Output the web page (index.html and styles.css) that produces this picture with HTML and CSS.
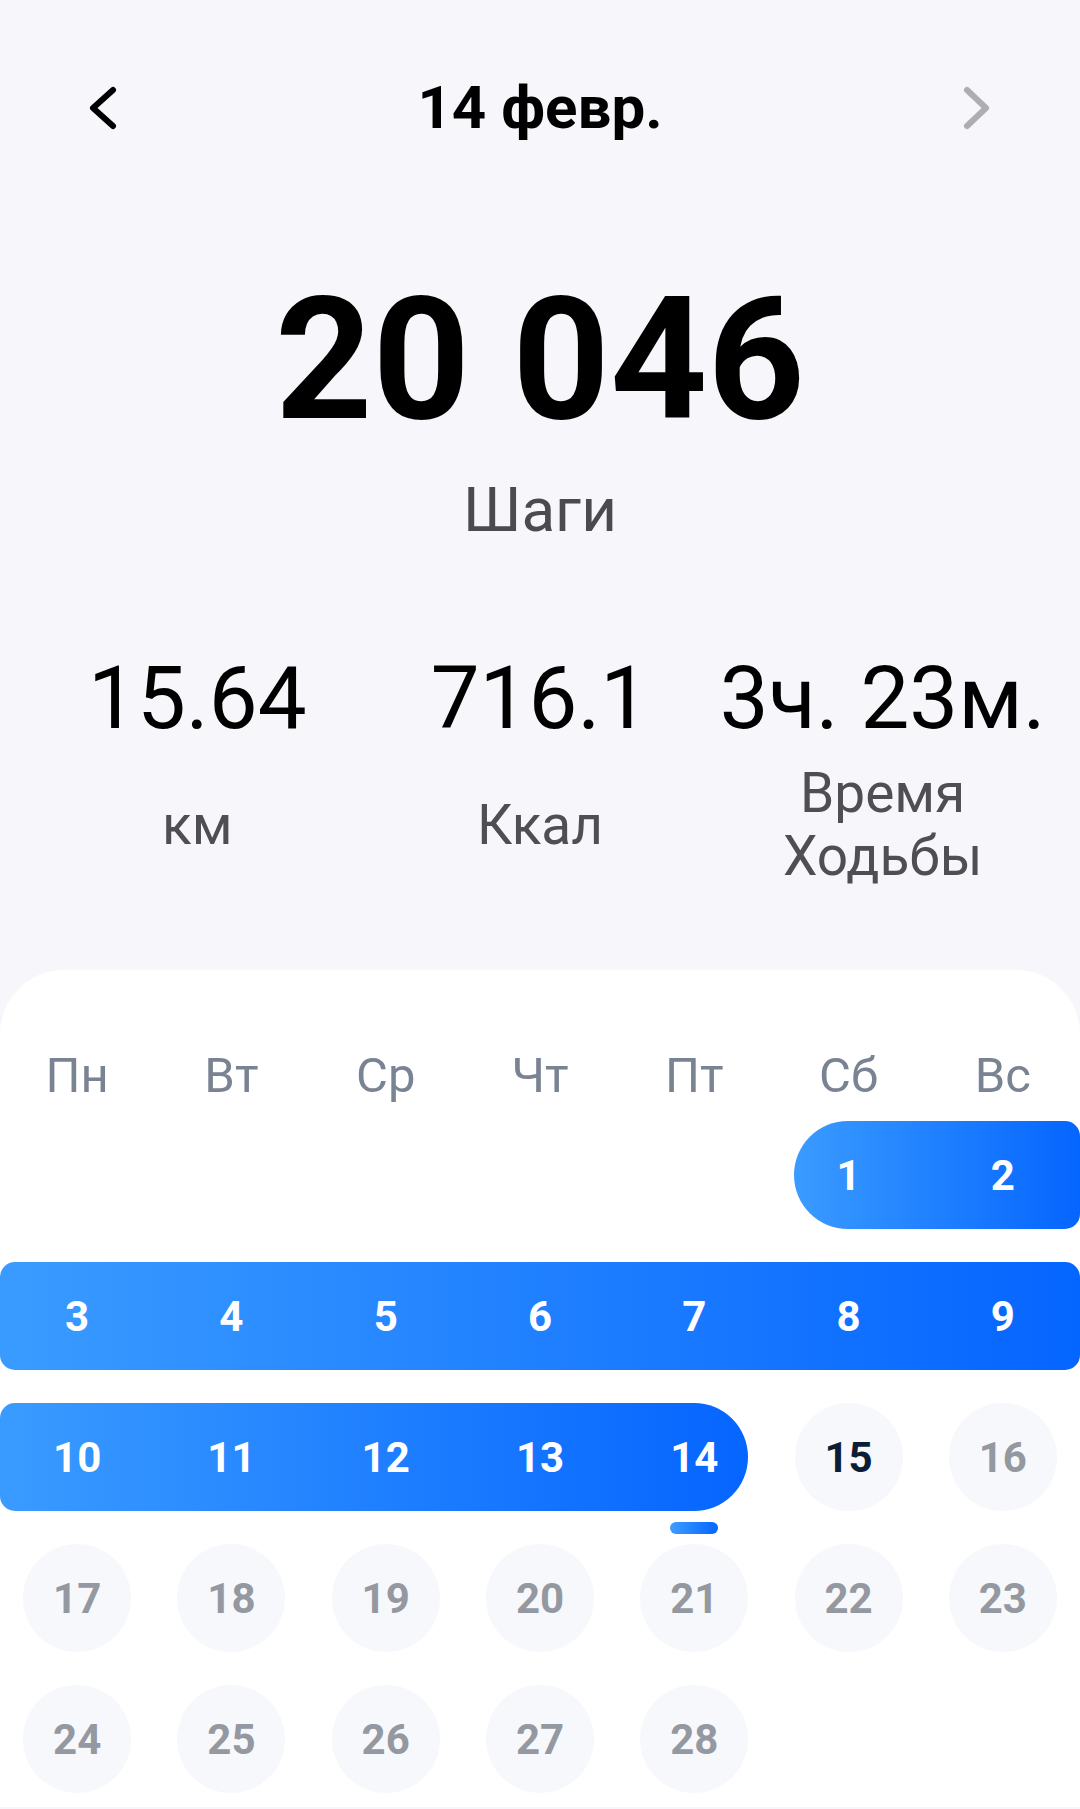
FILE: index.html
```html
<!DOCTYPE html>
<html lang="ru">

<head>
    <meta charset="UTF-8">
    <meta name="viewport" content="width=device-width, initial-scale=1.0">
    <title>Шаги</title>
    <link rel="stylesheet" href="styles.css">
</head>

<body>
    <div class="page">
        <!-- Date switcher -->
        <div class="topbar">
            <button class="nav-btn" aria-label="Назад">
                <svg viewBox="0 0 40 40" fill="none" stroke="#000" stroke-width="6" stroke-linecap="round" stroke-linejoin="round">
                    <polyline points="30,2 10,20 30,38" />
                </svg>
            </button>
            <h1 class="date-title">14 февр.</h1>
            <button class="nav-btn nav-btn--disabled" aria-label="Вперёд">
                <svg viewBox="0 0 40 40" fill="none" stroke="#adadb2" stroke-width="6" stroke-linecap="round" stroke-linejoin="round">
                    <polyline points="10,2 29,20 10,38" />
                </svg>
            </button>
        </div>

        <!-- Steps summary -->
        <div class="summary">
            <div class="steps-value">20 046</div>
            <div class="steps-label">Шаги</div>
        </div>

        <div class="stats">
            <div class="stat">
                <div class="stat-value">15.64</div>
                <div class="stat-label">км</div>
            </div>
            <div class="stat">
                <div class="stat-value">716.1</div>
                <div class="stat-label">Ккал</div>
            </div>
            <div class="stat">
                <div class="stat-value">3ч. 23м.</div>
                <div class="stat-label">Время<br>Ходьбы</div>
            </div>
        </div>

        <!-- Month calendar -->
        <div class="calendar">
            <div class="weekdays">
                <span>Пн</span>
                <span>Вт</span>
                <span>Ср</span>
                <span>Чт</span>
                <span>Пт</span>
                <span>Сб</span>
                <span>Вс</span>
            </div>

            <div class="weeks">
                <div class="week">
                    <div class="day"></div>
                    <div class="day"></div>
                    <div class="day"></div>
                    <div class="day"></div>
                    <div class="day"></div>
                    <div class="day day--in-range"><span class="day-num">1</span></div>
                    <div class="day day--in-range"><span class="day-num">2</span></div>
                    <div class="range range--sat-sun"></div>
                </div>
                <div class="week">
                    <div class="day day--in-range"><span class="day-num">3</span></div>
                    <div class="day day--in-range"><span class="day-num">4</span></div>
                    <div class="day day--in-range"><span class="day-num">5</span></div>
                    <div class="day day--in-range"><span class="day-num">6</span></div>
                    <div class="day day--in-range"><span class="day-num">7</span></div>
                    <div class="day day--in-range"><span class="day-num">8</span></div>
                    <div class="day day--in-range"><span class="day-num">9</span></div>
                    <div class="range range--full"></div>
                </div>
                <div class="week">
                    <div class="day day--in-range"><span class="day-num">10</span></div>
                    <div class="day day--in-range"><span class="day-num">11</span></div>
                    <div class="day day--in-range"><span class="day-num">12</span></div>
                    <div class="day day--in-range"><span class="day-num">13</span></div>
                    <div class="day day--in-range day--selected"><span class="day-num">14</span><span class="day-marker"></span></div>
                    <div class="day day--today"><span class="day-num">15</span></div>
                    <div class="day"><span class="day-num">16</span></div>
                    <div class="range range--mon-fri"></div>
                </div>
                <div class="week">
                    <div class="day"><span class="day-num">17</span></div>
                    <div class="day"><span class="day-num">18</span></div>
                    <div class="day"><span class="day-num">19</span></div>
                    <div class="day"><span class="day-num">20</span></div>
                    <div class="day"><span class="day-num">21</span></div>
                    <div class="day"><span class="day-num">22</span></div>
                    <div class="day"><span class="day-num">23</span></div>
                </div>
                <div class="week">
                    <div class="day"><span class="day-num">24</span></div>
                    <div class="day"><span class="day-num">25</span></div>
                    <div class="day"><span class="day-num">26</span></div>
                    <div class="day"><span class="day-num">27</span></div>
                    <div class="day"><span class="day-num">28</span></div>
                    <div class="day"></div>
                    <div class="day"></div>
                </div>
            </div>
        </div>
    </div>
</body>

</html>
```

FILE: styles.css
```css
body {
    margin: 0;
    padding: 0;
    background-color: #f7f7fb;
    font-family: Roboto, "Noto Sans", sans-serif;
    color: #000;
}

.page {
    width: 1080px;
    overflow: hidden;
}

/* Top bar */
.topbar {
    height: 216px;
    padding: 0 83px;
    box-sizing: border-box;
    display: flex;
    align-items: center;
    justify-content: space-between;
}

.nav-btn {
    width: 40px;
    height: 40px;
    padding: 0;
    border: none;
    background: none;
    display: flex;
    cursor: pointer;
}

.nav-btn svg {
    width: 40px;
    height: 40px;
    overflow: visible;
}

.date-title {
    margin: 0;
    font-size: 60px;
    font-weight: 700;
    line-height: 1;
}

/* Summary */
.summary {
    padding-top: 59px;
    text-align: center;
}

.steps-value {
    font-size: 170px;
    font-weight: 700;
    line-height: 170px;
}

.steps-label {
    margin-top: 34px;
    font-size: 62px;
    line-height: 62px;
    color: #4a4a4f;
}

.stats {
    margin-top: 113px;
    padding: 0 26px;
    display: grid;
    grid-template-columns: repeat(3, 1fr);
}

.stat {
    text-align: center;
}

.stat-value {
    font-size: 87px;
    line-height: 89px;
    white-space: nowrap;
}

.stat-label {
    height: 126px;
    margin-top: 19px;
    display: flex;
    align-items: center;
    justify-content: center;
    font-size: 55px;
    line-height: 63px;
    color: #4f4f53;
}

/* Calendar */
.calendar {
    margin-top: 82px;
    padding: 81px 0 14px;
    background-color: #fff;
    border-radius: 64px 64px 0 0;
}

.weekdays {
    display: grid;
    grid-template-columns: repeat(7, 1fr);
    font-size: 49px;
    line-height: 49px;
    color: #7a8391;
    text-align: center;
}

.weeks {
    margin-top: 21px;
    display: flex;
    flex-direction: column;
    gap: 33px;
}

.week {
    display: grid;
    grid-template-columns: repeat(7, 1fr);
    grid-template-rows: 108px;
}

.week > * {
    grid-row: 1;
}

.day:nth-child(1) { grid-column: 1; }
.day:nth-child(2) { grid-column: 2; }
.day:nth-child(3) { grid-column: 3; }
.day:nth-child(4) { grid-column: 4; }
.day:nth-child(5) { grid-column: 5; }
.day:nth-child(6) { grid-column: 6; }
.day:nth-child(7) { grid-column: 7; }

.day {
    position: relative;
    z-index: 1;
    display: flex;
    align-items: center;
    justify-content: center;
}

.day-num {
    width: 108px;
    height: 108px;
    border-radius: 50%;
    background-color: #f7f8fb;
    display: flex;
    align-items: center;
    justify-content: center;
    font-size: 42px;
    font-weight: 700;
    color: #9498a1;
}

.day--in-range .day-num {
    background: none;
    color: #fff;
}

.day--today .day-num {
    color: #0c1d36;
}

.day-marker {
    position: absolute;
    left: 50%;
    top: calc(100% + 11px);
    width: 48px;
    height: 12px;
    margin-left: -24px;
    border-radius: 6px;
    background: linear-gradient(90deg, #3d9dff, #0565ff);
}

.range {
    background: linear-gradient(90deg, #3a9bff, #0565ff);
}

.range--sat-sun {
    grid-column: 6 / 8;
    margin-left: 23px;
    border-radius: 54px 15px 15px 54px;
}

.range--full {
    grid-column: 1 / 8;
    border-radius: 15px;
}

.range--mon-fri {
    grid-column: 1 / 6;
    margin-right: 23px;
    border-radius: 15px 54px 54px 15px;
}
```
